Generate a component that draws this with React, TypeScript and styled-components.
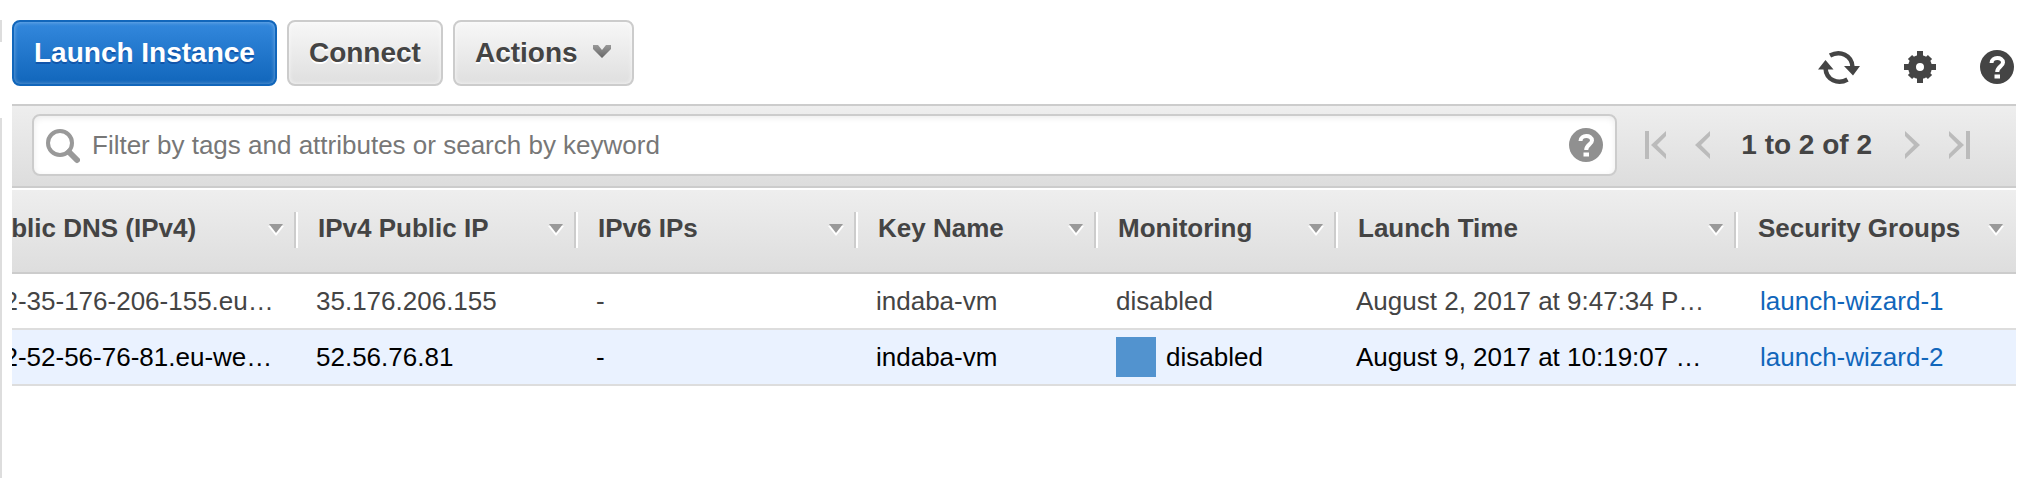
import React from "react";
import styled, { createGlobalStyle, css } from "styled-components";

const GlobalStyle = createGlobalStyle`
  *, *::before, *::after { box-sizing: border-box; }
  body {
    margin: 0;
    background: #fff;
    color: #444;
    font: 26px/32px "Liberation Sans", Arial, Helvetica, sans-serif;
  }
  button, input { font: inherit; color: inherit; margin: 0; }
`;

const Page = styled.div`
  display: flex;
  min-height: 100vh;
`;

const SidebarEdge = styled.div`
  flex: none;
  width: 2px;
  margin-right: 10px;
  padding-top: 20px;
  display: flex;
  flex-direction: column;
  gap: 76px;
`;

const EdgeSegment = styled.div<{ $fill?: boolean }>`
  background: #ddd;
  ${(p) => (p.$fill ? "flex: 1;" : "height: 22px;")}
`;

const Main = styled.main`
  flex: 1;
  min-width: 0;
  margin-right: 18px;
`;

const Toolbar = styled.div`
  display: flex;
  align-items: center;
  gap: 10px;
  padding: 20px 0 18px;
`;

const ToolbarButton = styled.button<{ $primary?: boolean }>`
  display: flex;
  align-items: center;
  gap: 14px;
  height: 66px;
  padding: 0 20px;
  border: 2px solid #ccc;
  border-radius: 8px;
  background: linear-gradient(#f7f7f7, #dfdfdf);
  box-shadow: inset 0 0 4px rgba(255, 255, 255, 0.8);
  color: #444;
  font-size: 28px;
  font-weight: bold;
  text-shadow: 0 2px 0 #fff;
  white-space: nowrap;
  cursor: pointer;
  ${(p) =>
    p.$primary &&
    css`
      border-color: #1166bb;
      background: linear-gradient(#3388dd, #1166bb);
      box-shadow: inset 0 0 4px rgba(255, 255, 255, 0.4);
      color: #fff;
      text-shadow: 0 2px 0 #1155aa;
    `}
`;

const Tools = styled.div`
  display: flex;
  align-items: center;
  gap: 44px;
  margin-left: auto;
  padding: 28px 2px 0 0;
`;

const IconButton = styled.button`
  display: flex;
  padding: 0;
  border: 0;
  background: none;
  color: #444;
  cursor: pointer;
  svg { display: block; }
`;

const FilterBar = styled.div`
  display: flex;
  align-items: center;
  height: 84px;
  padding: 0 46px 2px 20px;
  border: solid #ccc;
  border-width: 2px 0;
  background: linear-gradient(#eee, #ddd);
`;

const SearchBox = styled.div`
  flex: 1;
  display: flex;
  align-items: center;
  gap: 12px;
  height: 62px;
  padding: 0 12px 0 10px;
  border: 2px solid #ccc;
  border-radius: 8px;
  background: #fff;
  box-shadow: inset 0 2px 6px rgba(0, 0, 0, 0.08);
`;

const SearchInput = styled.input`
  flex: 1;
  min-width: 0;
  height: 40px;
  padding: 0;
  border: 0;
  outline: 0;
  background: none;
  &::placeholder { color: #777; opacity: 1; }
`;

const Pager = styled.nav`
  display: flex;
  align-items: center;
  gap: 28px;
  margin-left: 28px;
`;

const PageCount = styled.span`
  margin: 0 4px 0 2px;
  font-size: 28px;
  font-weight: bold;
  white-space: nowrap;
`;

const TableViewport = styled.div`
  overflow: hidden;
  margin-top: 2px;
`;

const Table = styled.table`
  width: calc(100% + 54px);
  margin-left: -54px;
  table-layout: fixed;
  border-collapse: separate;
  border-spacing: 0;
`;

const HeadRow = styled.tr`
  background: linear-gradient(#eee, #ddd);
`;

const HeadCell = styled.th`
  height: 84px;
  padding: 0 0 2px;
  border-bottom: 2px solid #ccc;
  text-align: left;
  white-space: nowrap;
`;

const HeadLabel = styled.div<{ $last?: boolean }>`
  display: flex;
  align-items: center;
  justify-content: space-between;
  height: 36px;
  padding: 0 12px 4px 20px;
  ${(p) =>
    !p.$last &&
    css`
      border-right: 2px solid #fff;
      box-shadow: inset -2px 0 0 #ccc;
    `}
  svg { margin-top: 4px; }
`;

const BodyRow = styled.tr<{ $selected?: boolean }>`
  ${(p) =>
    p.$selected &&
    css`
      background: #eaf2ff;
      color: #000;
    `}
`;

const Cell = styled.td`
  height: 56px;
  padding: 0 0 0 18px;
  border-bottom: 2px solid #ddd;
  white-space: nowrap;
`;

const Marked = styled.span`
  display: flex;
  align-items: center;
  gap: 10px;
`;

const Swatch = styled.span`
  width: 40px;
  height: 40px;
  background: #5293cf;
`;

const GroupLink = styled.a`
  padding-left: 4px;
  color: #1166bb;
  text-decoration: none;
`;

const HelpIcon = ({ color }: { color: string }) => (
  <svg width="34" height="34" viewBox="0 0 34 34" aria-hidden="true">
    <circle cx="17" cy="17" r="17" fill={color} />
    <path d="M11.500 13C11.500 6.500 23 6.500 23 12.500C23 16.500 17.200 16.500 17.200 22" fill="none" stroke="#fff" strokeWidth="4" />
    <rect x="14.500" y="24.500" width="5.500" height="4" fill="#fff" />
  </svg>
);

const RefreshIcon = () => (
  <svg width="42" height="38" viewBox="0 -3 42 38" aria-hidden="true">
    <g fill="none" stroke="#444" strokeWidth="4.500">
      <path d="M12 4.500C22 -1 34 4 34.500 16" />
      <path d="M29.500 28.500C20 34 8 29 7.500 17" />
    </g>
    <path d="M26 15H42L35 24.500Z M0 18.500L7.500 9L15.500 18.500Z" fill="#444" />
  </svg>
);

const GearIcon = () => (
  <svg width="32" height="32" viewBox="0 0 32 32" aria-hidden="true">
    <path
      d="M16 0V9M16 23V32M0 16H9M23 16H32M6 6L11 11M21 21L26 26M26 6L21 11M11 21L6 26"
      stroke="#444"
      strokeWidth="6"
    />
    <circle cx="16" cy="16" r="8" fill="none" stroke="#444" strokeWidth="8" />
  </svg>
);

const SearchIcon = () => (
  <svg width="36" height="38" viewBox="0 0 36 38" aria-hidden="true">
    <circle cx="16" cy="17" r="12" fill="none" stroke="#999" strokeWidth="4" />
    <path d="M25 26L33 34" stroke="#999" strokeWidth="6" strokeLinecap="round" />
  </svg>
);

const PagerIcon = ({ bar, flip }: { bar?: boolean; flip?: boolean }) => (
  <svg width={bar ? 22 : 16} height="28" viewBox={bar ? "-6 0 22 28" : "0 0 16 28"} aria-hidden="true">
    <g transform={flip ? `translate(${bar ? 10 : 16} 0) scale(-1 1)` : undefined}>
      <path d="M15 0V5L6 14L15 23V28L0 14Z" fill="#bbb" />
      {bar && <path d="M-4 0V28" stroke="#bbb" strokeWidth="4" />}
    </g>
  </svg>
);

const MenuIcon = () => (
  <svg width="20" height="16" viewBox="0 0 20 16" aria-hidden="true">
    <defs>
      <linearGradient id="menu-fill" x1="0" y1="0" x2="0" y2="1">
        <stop offset="0" stopColor="#999" />
        <stop offset="1" stopColor="#666" />
      </linearGradient>
    </defs>
    <path d="M1 0H6L10 5L14 0H19V4L10 13L1 4Z" fill="url(#menu-fill)" />
  </svg>
);

const SortIcon = () => (
  <svg width="16" height="12" viewBox="0 0 16 12" aria-hidden="true">
    <path d="M0 2H16L8 12Z" fill="#fff" />
    <path d="M1 0H15L8 9Z" fill="#999" />
  </svg>
);

const columns = [
  { title: "Public DNS (IPv4)", width: 340 },
  { title: "IPv4 Public IP", width: 280 },
  { title: "IPv6 IPs", width: 280 },
  { title: "Key Name", width: 240 },
  { title: "Monitoring", width: 240 },
  { title: "Launch Time", width: 400 },
  { title: "Security Groups" },
];

const instances = [
  { dns: "ec2-35-176-206-155.eu…", ip: "35.176.206.155", ipv6: "-", keyName: "indaba-vm", monitoring: "disabled", launched: "August 2, 2017 at 9:47:34 P…", group: "launch-wizard-1", selected: false },
  { dns: "ec2-52-56-76-81.eu-we…", ip: "52.56.76.81", ipv6: "-", keyName: "indaba-vm", monitoring: "disabled", launched: "August 9, 2017 at 10:19:07 …", group: "launch-wizard-2", selected: true },
];

export default function App() {
  return (
    <Page>
      <GlobalStyle />
      <SidebarEdge>
        <EdgeSegment />
        <EdgeSegment $fill />
      </SidebarEdge>
      <Main>
        <Toolbar>
          <ToolbarButton $primary>Launch Instance</ToolbarButton>
          <ToolbarButton>Connect</ToolbarButton>
          <ToolbarButton>Actions <MenuIcon /></ToolbarButton>
          <Tools>
            <IconButton aria-label="Refresh"><RefreshIcon /></IconButton>
            <IconButton aria-label="Settings"><GearIcon /></IconButton>
            <IconButton aria-label="Help"><HelpIcon color="#444" /></IconButton>
          </Tools>
        </Toolbar>
        <FilterBar>
          <SearchBox>
            <SearchIcon />
            <SearchInput type="text" aria-label="Filter instances" placeholder="Filter by tags and attributes or search by keyword" />
            <IconButton aria-label="Filter help"><HelpIcon color="#909090" /></IconButton>
          </SearchBox>
          <Pager aria-label="Pages">
            <IconButton aria-label="First page"><PagerIcon bar /></IconButton>
            <IconButton aria-label="Previous page"><PagerIcon /></IconButton>
            <PageCount>1 to 2 of 2</PageCount>
            <IconButton aria-label="Next page"><PagerIcon flip /></IconButton>
            <IconButton aria-label="Last page"><PagerIcon bar flip /></IconButton>
          </Pager>
        </FilterBar>
        <TableViewport>
          <Table>
            <colgroup>
              {columns.map((c) => <col key={c.title} width={c.width} />)}
            </colgroup>
            <thead>
              <HeadRow>
                {columns.map((c, i) => (
                  <HeadCell key={c.title} scope="col">
                    <HeadLabel $last={i === columns.length - 1}>{c.title}<SortIcon /></HeadLabel>
                  </HeadCell>
                ))}
              </HeadRow>
            </thead>
            <tbody>
              {instances.map((r) => (
                <BodyRow key={r.ip} $selected={r.selected}>
                  <Cell>{r.dns}</Cell>
                  <Cell>{r.ip}</Cell>
                  <Cell>{r.ipv6}</Cell>
                  <Cell>{r.keyName}</Cell>
                  <Cell>{r.selected ? <Marked><Swatch />{r.monitoring}</Marked> : r.monitoring}</Cell>
                  <Cell>{r.launched}</Cell>
                  <Cell><GroupLink href="#">{r.group}</GroupLink></Cell>
                </BodyRow>
              ))}
            </tbody>
          </Table>
        </TableViewport>
      </Main>
    </Page>
  );
}
